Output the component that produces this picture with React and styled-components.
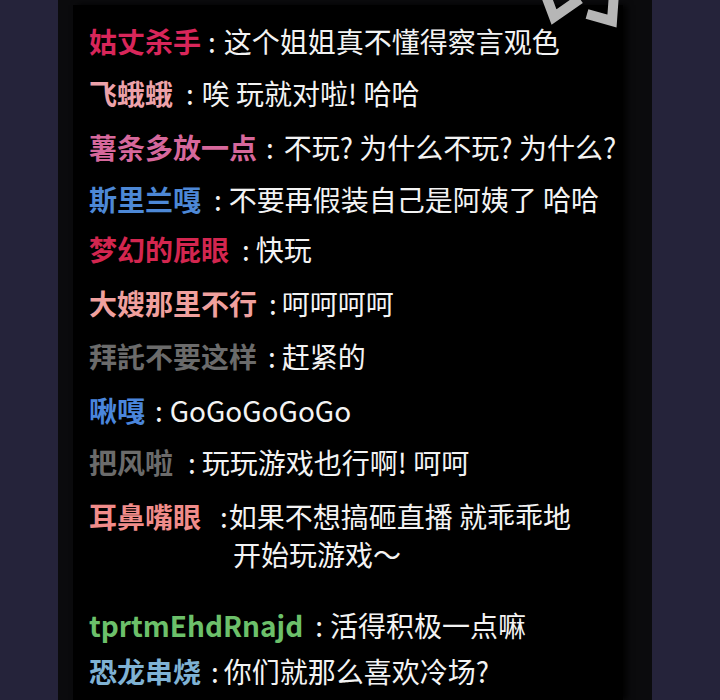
import React from "react";
import styled, { createGlobalStyle } from "styled-components";

const GlobalStyle = createGlobalStyle`
  html, body { margin: 0; padding: 0; background: #25233a; }
  body { font-family: "Noto Sans CJK SC", "Noto Sans", sans-serif; }
`;

const Page = styled.div`
  padding-left: 58px;
  height: 700px;
  overflow: hidden;
`;

const Panel = styled.div`
  width: 594px;
  box-sizing: border-box;
  height: 700px;
  background: #0b0b0d;
  padding: 5px 29px 0 15px;
`;

const Chat = styled.div`
  position: relative;
  height: 100%;
  background: #000;
  padding: 10px 0 0 16px;
  box-sizing: border-box;
  box-shadow: 4px 0 6px rgba(0, 0, 0, 0.9);
`;

const Logo = styled.svg`
  position: absolute;
  top: -9px;
  right: -5px;
`;

const Row = styled.div`
  display: flex;
  align-items: flex-start;
  margin-top: ${(p) => p.$mt || 0}px;
  line-height: ${(p) => p.$lh || 52}px;
  font-size: 28px;
  white-space: pre;
`;

const Name = styled.span`
  color: ${(p) => p.$color};
  font-weight: 700;
`;

const Text = styled.div`
  display: flex;
  flex-direction: column;
  color: #f3f3f3;
  font-weight: 400;
`;

const Colon = styled.span`
  margin-left: ${(p) => p.$gap}px;
  margin-right: ${(p) => p.$after}px;
`;

const Line = styled.div`
  padding-left: ${(p) => p.$indent || 0}px;
`;

const rows = [
  { name: "姑丈杀手", color: "#d8265a", gap: 7, after: 8, msg: "这个姐姐真不懂得察言观色" },
  { name: "飞蛾蛾", color: "#eda2aa", gap: 13, after: 8, msg: "唉 玩就对啦! 哈哈" },
  { name: "薯条多放一点", color: "#d6689c", gap: 9, after: 10, mt: 2, msg: "不玩? 为什么不玩? 为什么?" },
  { name: "斯里兰嘎", color: "#4d88d6", gap: 13, after: 7, msg: "不要再假装自己是阿姨了 哈哈" },
  { name: "梦幻的屁眼", color: "#d3264f", gap: 13, after: 6, mt: -2, msg: "快玩" },
  { name: "大嫂那里不行", color: "#f0a09e", gap: 12, after: 5, mt: 2, msg: "呵呵呵呵" },
  { name: "拜託不要这样", color: "#6b6b6b", gap: 11, after: 6, mt: 1, msg: "赶紧的" },
  { name: "啾嘎", color: "#4a86dc", gap: 10, after: 7, mt: 2, msg: "GoGoGoGoGo" },
  { name: "把风啦", color: "#6b6b6b", gap: 15, after: 6, msg: "玩玩游戏也行啊! 呵呵" },
  {
    name: "耳鼻嘴眼",
    color: "#f08c8a",
    gap: 19,
    after: 1,
    mt: 9,
    lh: 38,
    msg: "如果不想搞砸直播 就乖乖地",
    more: "开始玩游戏～",
  },
  { name: "tprtmEhdRnajd", color: "#6cc06a", gap: 12, after: 7, mt: 26, msg: "活得积极一点嘛" },
  { name: "恐龙串烧", color: "#7fb2d4", gap: 10, after: 5, mt: -6, msg: "你们就那么喜欢冷场?" },
];

export default function App() {
  return (
    <>
      <GlobalStyle />
      <Page>
        <Panel>
          <Chat>
            <Logo width="90" height="32" viewBox="540 -5 90 32">
              <path d="M547 -8 L556 16 L582 -2" fill="none" stroke="#b6b6b6" strokeWidth="10" strokeLinejoin="miter" />
              <path d="M589 13 L614 20 L616 -8" fill="none" stroke="#b6b6b6" strokeWidth="10" strokeLinejoin="miter" />
            </Logo>
            {rows.map((r) => (
              <Row key={r.name} $mt={r.mt} $lh={r.lh}>
                <Name $color={r.color}>{r.name}</Name>
                <Text>
                  <Line>
                    <Colon $gap={r.gap} $after={r.after}>:</Colon>
                    {r.msg}
                  </Line>
                  {r.more && <Line $indent={r.gap + 13}>{r.more}</Line>}
                </Text>
              </Row>
            ))}
          </Chat>
        </Panel>
      </Page>
    </>
  );
}
